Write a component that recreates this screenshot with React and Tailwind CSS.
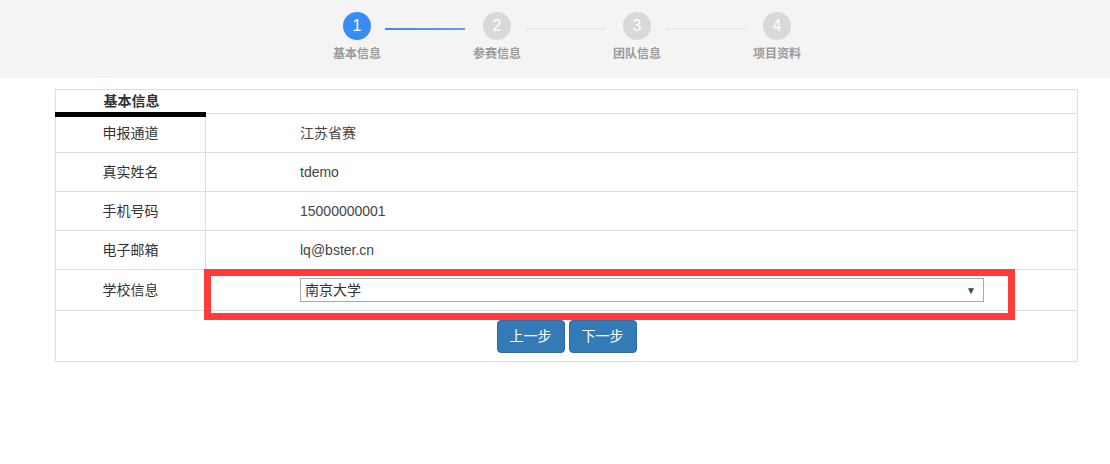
import React from 'react';

const steps = ['基本信息', '参赛信息', '团队信息', '项目资料'];

const rows = [
  { label: '申报通道', value: '江苏省赛' },
  { label: '真实姓名', value: 'tdemo' },
  { label: '手机号码', value: '15000000001' },
  { label: '电子邮箱', value: 'lq@bster.cn' },
];

const font = { fontFamily: '"Liberation Sans", "Noto Sans CJK SC", sans-serif' };

const Stepper = () => (
  <div className="h-[78px] bg-[#f4f4f4] flex pl-[343px] pt-[12px]">
    {steps.map((s, i) => (
      <div key={s} className="flex">
        <div className="w-[28px] flex flex-col items-center">
          <div
            className={
              i === 0
                ? 'w-[28px] h-[28px] rounded-full bg-[#3a8cf5] text-white text-[16px] flex items-center justify-center'
                : 'w-[28px] h-[28px] rounded-full bg-[#d9d9d9] text-white text-[16px] flex items-center justify-center'
            }
          >
            {i + 1}
          </div>
          <div className="mt-[6px] text-[12px] font-bold text-[#9a9a9a] whitespace-nowrap leading-[16px]">{s}</div>
        </div>
        {i < steps.length - 1 && (
          <div className="w-[112px] pl-[14px] pr-[18px] pt-[16px]">
            <div
              className={
                i === 0
                  ? 'h-[2px] bg-gradient-to-r from-[#3a88f4] to-[#5ba0f8]'
                  : 'h-[2px] bg-[#ebebeb]'
              }
            />
          </div>
        )}
      </div>
    ))}
  </div>
);

export default function App() {
  return (
    <div className="w-[1110px] h-[464px] bg-white text-[14px] text-[#333]" style={font}>
      <Stepper />

      <div className="relative mt-[11px] ml-[55px] w-[1023px] border border-[#ddd]">
        {/* header */}
        <div className="relative h-[24px] border-b border-[#ddd] flex">
          <div className="w-[151px] text-center font-bold leading-[22px]">基本信息</div>
          <div className="absolute left-[-1px] bottom-[-4px] w-[151px] h-[5px] bg-black" />
        </div>

        {rows.map((r) => (
          <div key={r.label} className="flex h-[39px] border-b border-[#ddd]">
            <div className="w-[150px] border-r border-[#ddd] flex items-center justify-center">{r.label}</div>
            <div className="flex-1 flex items-center pl-[94px] text-[#444]">{r.value}</div>
          </div>
        ))}

        <div className="flex h-[41px] border-b border-[#ddd]">
          <div className="w-[150px] border-r border-[#ddd] flex items-center justify-center">学校信息</div>
          <div className="flex-1 flex items-center pl-[94px] pr-[93px]">
            <div className="w-full h-[24px] border border-[#a9a9a9] flex items-center justify-between pl-[4px] pr-[7px] text-[#333]">
              <span>南京大学</span>
              <span className="text-[10px] text-[#444]">▼</span>
            </div>
          </div>
        </div>

        <div className="h-[50px] flex justify-center gap-[4px] pt-[9px]">
          <button className="w-[68px] h-[33px] bg-[#337ab7] border border-[#2e6da4] rounded-[4px] text-white text-[14px]">上一步</button>
          <button className="w-[68px] h-[33px] bg-[#337ab7] border border-[#2e6da4] rounded-[4px] text-white text-[14px]">下一步</button>
        </div>

        {/* annotation box */}
        <div className="absolute left-[148px] top-[179px] w-[811px] h-[51px] border-[7px] border-[#ff3b3b] pointer-events-none" />
      </div>
    </div>
  );
}
